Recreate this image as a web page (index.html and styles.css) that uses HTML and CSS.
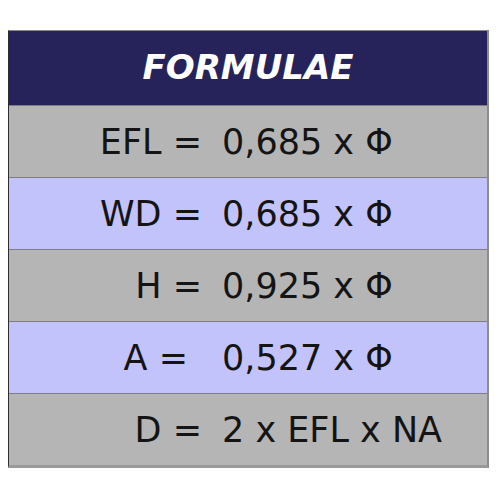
FILE: index.html
```html
<!DOCTYPE html>
<html>
<head>
<meta charset="utf-8">
<link rel="stylesheet" href="styles.css">
</head>
<body>
<div class="table">
  <div class="head">FORMULAE</div>
  <div class="row gray"><span class="lbl">EFL =</span><span class="val">0,685 x Φ</span></div>
  <div class="row lav"><span class="lbl">WD =</span><span class="val">0,685 x Φ</span></div>
  <div class="row gray"><span class="lbl">H =</span><span class="val">0,925 x Φ</span></div>
  <div class="row lav"><span class="lbl lbl-a">A =</span><span class="val">0,527 x Φ</span></div>
  <div class="row gray"><span class="lbl">D =</span><span class="val">2 x EFL x NA</span></div>
</div>
</body>
</html>
```
FILE: styles.css
```css
html, body {
  margin: 0;
  padding: 0;
  background: #ffffff;
}
body {
  padding: 30px 0 0 8px;
  font-family: "DejaVu Sans", Verdana, sans-serif;
}
.table {
  width: 478px;
  border-left: 1px solid #2e2e2e;
  border-right: 2px solid #8c8c8c;
  border-top: 1px solid #8a8a8a;
  border-bottom: 3px solid #9a9a9a;
  box-shadow: 0 4px 0 #dcdcdc;
}
.head {
  height: 74px;
  background: #25235a;
  color: #ffffff;
  font-weight: bold;
  font-style: italic;
  font-size: 34px;
  display: flex;
  align-items: center;
  justify-content: center;
  padding-bottom: 3px;
  box-sizing: border-box;
}
.row {
  height: 72px;
  border-top: 1px solid #7e7e7e;
  box-sizing: border-box;
  display: grid;
  grid-template-columns: 193px auto;
  column-gap: 20px;
  align-items: center;
  font-size: 35px;
  color: #141414;
}
.gray { background: #b5b5b5; }
.lav { background: #c3c3fb; }
.lbl {
  text-align: right;
  white-space: pre;
}
.lbl-a { padding-right: 14px; }
.val { white-space: nowrap; }
```
